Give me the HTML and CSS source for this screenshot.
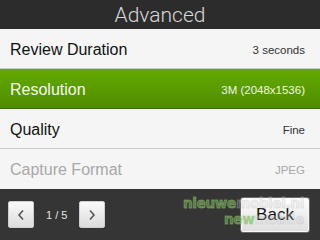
FILE: index.html
```html
<!DOCTYPE html>
<html>
<head>
<meta charset="utf-8">
<link rel="stylesheet" href="styles.css">
</head>
<body>
<div class="screen">
  <header class="title-bar"><h1 class="title">Advanced</h1></header>
  <ul class="menu">
    <li class="row"><span class="label">Review Duration</span><span class="value">3 seconds</span></li>
    <li class="row selected"><span class="label">Resolution</span><span class="value">3M (2048x1536)</span></li>
    <li class="row"><span class="label">Quality</span><span class="value">Fine</span></li>
    <li class="row disabled"><span class="label">Capture Format</span><span class="value">JPEG</span></li>
  </ul>
  <footer class="footer">
    <div class="pager">
      <button class="nav-btn" aria-label="Previous">
        <svg width="8" height="12" viewBox="0 0 8 12"><path d="M6 1.5 L2 6 L6 10.5" fill="none" stroke="#555" stroke-width="1.6"/></svg>
      </button>
      <span class="page">1 / 5</span>
      <button class="nav-btn" aria-label="Next">
        <svg width="8" height="12" viewBox="0 0 8 12"><path d="M2 1.5 L6 6 L2 10.5" fill="none" stroke="#555" stroke-width="1.6"/></svg>
      </button>
    </div>
    <div class="watermark">
      <span class="wm-line"><span class="wm-green">nieuwe</span><span class="wm-gray">mobiel.nl</span></span>
      <span class="wm-line"><span class="wm-green">new</span><span class="wm-gray">mobile</span></span>
    </div>
    <button class="back-btn">Back</button>
  </footer>
</div>
</body>
</html>
```

FILE: styles.css
```css
html, body {
  margin: 0;
  padding: 0;
  background: #333;
}
.screen {
  width: 320px;
  height: 240px;
  overflow: hidden;
  display: flex;
  flex-direction: column;
  font-family: "Liberation Sans", Arial, sans-serif;
}
.title-bar {
  height: 29px;
  background: #2c2c2c;
  display: flex;
  align-items: center;
  justify-content: center;
}
.title {
  margin: 0;
  padding-top: 2px;
  font-family: Roboto, "Liberation Sans", sans-serif;
  font-weight: 300;
  font-size: 21px;
  color: #d8d8d8;
  line-height: 27px;
}
.menu {
  list-style: none;
  margin: 0;
  padding: 0;
}
.row {
  box-sizing: border-box;
  height: 40px;
  display: flex;
  align-items: center;
  justify-content: space-between;
  padding: 2px 15px 0 10px;
  background: #f5f5f5;
  border-bottom: 1px solid #c9c9c9;
  color: #111;
}
.label {
  font-size: 16px;
}
.value {
  font-size: 11.5px;
  color: #333;
}
.row.selected {
  background: linear-gradient(#63aa02, #4f8c00);
  border-bottom: 1px solid #3b6a00;
  color: #f4f8ee;
}
.row.selected .value {
  color: #f0f6e8;
}
.row.disabled {
  border-bottom: none;
  color: #a8a8a8;
}
.row.disabled .value {
  color: #a8a8a8;
}
.footer {
  flex: 1;
  position: relative;
  background: #353535;
  display: flex;
  align-items: center;
  justify-content: space-between;
  padding: 0 10px 0 8px;
}
.pager {
  display: flex;
  align-items: center;
  gap: 12px;
}
.nav-btn {
  width: 26px;
  height: 27px;
  padding: 0;
  border: 1px solid #cfcfcf;
  border-radius: 2px;
  background: linear-gradient(#fafafa, #dcdcdc);
  display: flex;
  align-items: center;
  justify-content: center;
}
.page {
  font-size: 11px;
  color: #e4e4e4;
}
.back-btn {
  width: 70px;
  height: 36px;
  padding: 0;
  border: 1px solid #6a6a6a;
  border-radius: 3px;
  background: linear-gradient(#ffffff, #dedede);
  box-shadow: inset 0 0 0 1px #f8f8f8;
  font-family: "Liberation Sans", Arial, sans-serif;
  font-size: 17px;
  color: #111;
  margin-top: 1px;
}
.watermark {
  position: absolute;
  right: 16px;
  top: 6px;
  z-index: 1;
  display: flex;
  flex-direction: column;
  align-items: flex-end;
  font-family: "DejaVu Sans", sans-serif;
  font-weight: bold;
  font-size: 13.5px;
  line-height: 16px;
  letter-spacing: -0.3px;
  pointer-events: none;
}
.wm-green {
  color: rgba(110, 170, 80, 0.55);
  -webkit-text-stroke: 1px rgba(150, 200, 120, 0.5);
}
.wm-gray {
  color: rgba(210, 210, 210, 0.2);
  -webkit-text-stroke: 1px rgba(190, 190, 190, 0.35);
}
```
